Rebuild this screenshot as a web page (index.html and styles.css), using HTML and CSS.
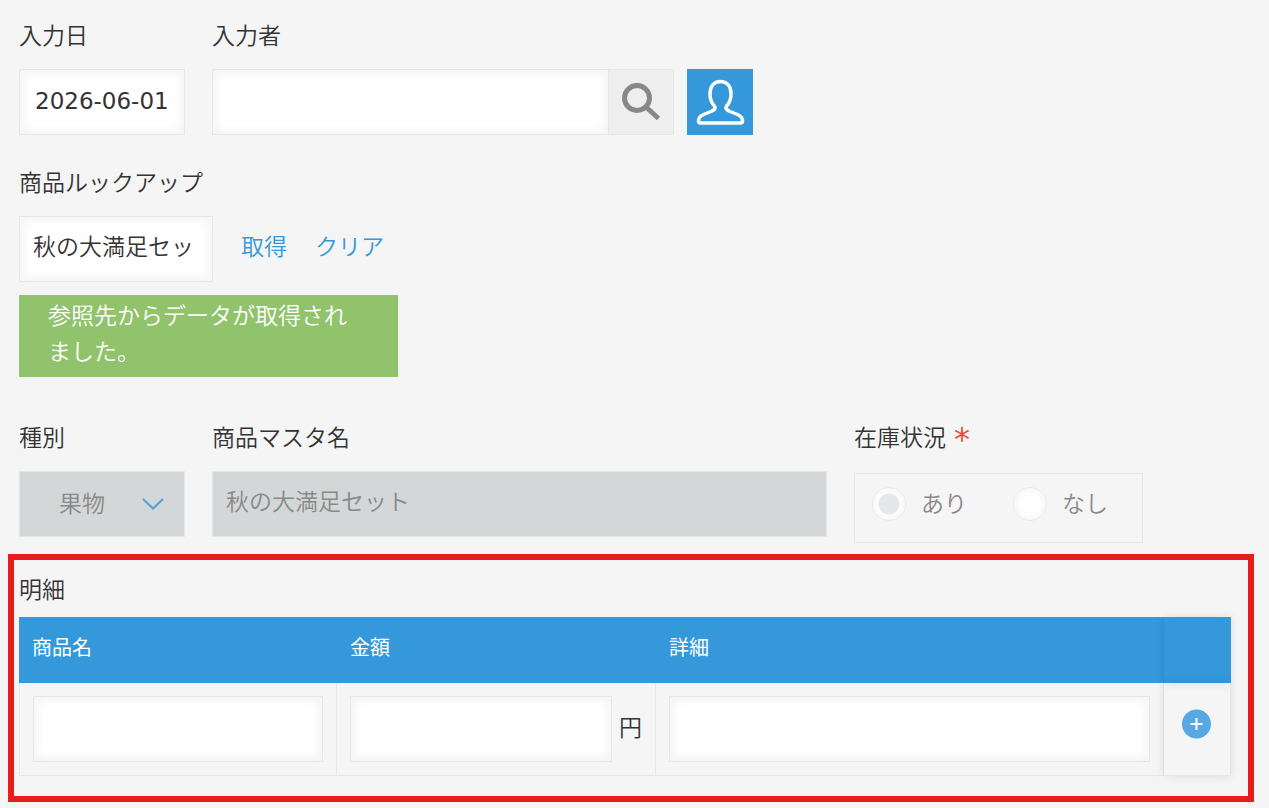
FILE: index.html
```html
<!DOCTYPE html>
<html lang="ja">
<head>
  <meta charset="UTF-8" />
  <meta name="viewport" content="width=device-width, initial-scale=1" />
  <title>商品入力</title>
  <link rel="stylesheet" href="styles.css">
</head>
<body>

<form class="record">
  <div class="row">
    <div class="field field-small">
      <label class="field-label" for="inputDate">入力日</label>
      <input class="text-input date-input" type="text" id="inputDate" value="2026-06-01" />
    </div>
    <div class="field">
      <label class="field-label" for="inputUser">入力者</label>
      <div class="user-select">
        <div class="search-box">
          <input class="text-input" type="text" id="inputUser" />
          <button type="button" class="search-btn" aria-label="検索">
            <svg width="64" height="64" viewBox="0 0 64 64">
              <circle cx="28" cy="28" r="12.5" fill="none" stroke="#888" stroke-width="5" />
              <path d="M37 37L49.5 48.5" stroke="#888" stroke-width="5" />
            </svg>
          </button>
        </div>
        <button type="button" class="user-btn" aria-label="ユーザー選択">
          <svg width="66" height="66" viewBox="0 0 66 66">
            <path d="M33.5 12.5C27 12.5 23 17.5 23 25C23 30 25 34.5 27.5 37C29 39.5 27.5 41 24 42.5L16.5 45.5C13 47 11.500 49 11.5 52Q11.5 54 13.5 54H53.5Q55.500 54 55.500 52C55.5 49 54 47 50.5 45.5L43 42.5C39.5 41 38 39.5 39.5 37C42 34.5 44 30 44 25C44 17.5 40 12.5 33.5 12.5Z" fill="none" stroke="#fff" stroke-width="3.5" stroke-linejoin="round" />
          </svg>
        </button>
      </div>
    </div>
  </div>

  <div class="row">
    <div class="field">
      <label class="field-label" for="lookup">商品ルックアップ</label>
      <div class="lookup">
        <input class="text-input lookup-input" type="text" id="lookup" value="秋の大満足セット" />
        <a href="#">取得</a>
        <a href="#">クリア</a>
      </div>
      <p class="message">参照先からデータが取得されました。</p>
    </div>
  </div>

  <div class="row row-master">
    <div class="field field-small">
      <label class="field-label" for="kind">種別</label>
      <div class="select-box">
        <select id="kind" disabled>
          <option>果物</option>
        </select>
        <svg class="arrow" width="22" height="14" viewBox="0 0 22 14">
          <path d="M1 2L11 11.5L21 2" fill="none" stroke="#4fa3dc" stroke-width="2.2" />
        </svg>
      </div>
    </div>
    <div class="field field-wide">
      <label class="field-label" for="masterName">商品マスタ名</label>
      <input class="text-input" type="text" id="masterName" value="秋の大満足セット" disabled />
    </div>
    <div class="field">
      <span class="field-label" id="stockLabel">在庫状況<span class="required">*</span></span>
      <div class="radio-group" role="radiogroup" aria-labelledby="stockLabel">
        <label><input type="radio" name="stock" checked disabled /><span>あり</span></label>
        <label><input type="radio" name="stock" disabled /><span>なし</span></label>
      </div>
    </div>
  </div>

  <section class="details">
    <h2 class="field-label">明細</h2>
    <table>
      <colgroup>
        <col class="col-name" />
        <col class="col-price" />
        <col />
        <col class="col-action" />
      </colgroup>
      <thead>
        <tr>
          <th id="thName">商品名</th>
          <th id="thPrice">金額</th>
          <th id="thDetail">詳細</th>
          <th class="action"></th>
        </tr>
      </thead>
      <tbody>
        <tr>
          <td><input class="text-input" type="text" aria-labelledby="thName" /></td>
          <td>
            <div class="price">
              <input class="text-input" type="text" aria-labelledby="thPrice" />
              <span>円</span>
            </div>
          </td>
          <td><input class="text-input" type="text" aria-labelledby="thDetail" /></td>
          <td class="action">
            <button type="button" class="add-btn" aria-label="行を追加">
              <svg width="30" height="30" viewBox="0 0 30 30">
                <circle cx="15.5" cy="15" r="14.5" fill="#55a8e2" />
                <path d="M9.5 15H21.5M15.5 9V21" stroke="#fff" stroke-width="2" />
              </svg>
            </button>
          </td>
        </tr>
      </tbody>
    </table>
  </section>
</form>

</body>
</html>
```

FILE: styles.css
```css
* {
  margin: 0; padding: 0; box-sizing: border-box;
}
body {
  background: #f5f5f5;
  color: #333;
  font-family: 'Noto Sans CJK JP', sans-serif;
  font-size: 23px;
  font-weight: 350;
  line-height: 36px;
  padding: 16px 15px 6px 8px;
}
input, select, button {
  font: inherit;
  color: inherit;
}
button {
  border: none;
  cursor: pointer;
}
svg {
  display: block;
}
.row {
  display: flex;
  align-items: flex-start;
  gap: 27px;
  padding-left: 11px;
  margin-bottom: 28px;
}
.row-master {
  margin-top: 41px;
  margin-bottom: 11px;
}
.field-small {
  width: 166px;
}
.field-wide {
  width: 615px;
}
.field-label {
  display: block;
  font-size: 23px;
  font-weight: 350;
  margin-bottom: 17px;
}
.text-input {
  display: block;
  width: 100%;
  height: 66px;
  padding: 0 13px 8px;
  background: #fff;
  border: 1px solid #e3e7e8;
  border-radius: 0;
  box-shadow: inset 0 0 8px 4px #f5f5f5;
}
.text-input:disabled {
  background: #d4d7d7;
  color: #888;
  box-shadow: none;
}
.date-input {
  font-family: 'DejaVu Sans', sans-serif;
  font-weight: 400;
  padding: 0 15px 2px;
}
.user-select {
  display: flex;
  gap: 13px;
}
.search-box {
  display: flex;
  width: 462px;
}
.search-box .text-input {
  flex: 1;
  min-width: 0;
}
.search-btn {
  width: 66px;
  height: 66px;
  margin-left: -1px;
  background: #eee;
  border: 1px solid #e3e7e8;
}
.user-btn {
  width: 66px;
  height: 66px;
  background: #3498db;
}
.lookup {
  display: flex;
  align-items: center;
}
.lookup-input {
  width: 194px;
}
.lookup a {
  color: #3498db;
  text-decoration: none;
  margin-left: 28px;
  padding-bottom: 8px;
}
.message {
  width: 379px;
  margin-top: 13px;
  padding: 1px 29px 9px;
  background: #91c36c;
  color: #fff;
}
.select-box {
  position: relative;
}
select {
  display: block;
  appearance: none;
  width: 100%;
  height: 66px;
  padding: 0 39px 4px;
  background: #d4d7d7;
  border: 1px solid #e3e7e8;
  border-radius: 0;
}
select:disabled {
  color: #888;
  opacity: 1;
}
.arrow {
  position: absolute;
  right: 21px;
  top: 26px;
  pointer-events: none;
}
.required {
  font-family: 'DejaVu Sans', sans-serif;
  font-size: 32px;
  font-weight: 400;
  line-height: 1px;
  vertical-align: -4px;
  color: #e74c3c;
  margin-left: 8px;
}
.radio-group {
  display: flex;
  gap: 46px;
  width: 289px;
  height: 70px;
  margin-top: 19px;
  padding: 13px 17px;
  border: 1px solid #e3e7e8;
  color: #888;
}
.radio-group label {
  display: flex;
  align-items: center;
  gap: 15px;
  height: 34px;
}
.radio-group span {
  padding-bottom: 4px;
}
.radio-group input {
  appearance: none;
  width: 34px;
  height: 34px;
  border: 1px solid #e8eaea;
  border-radius: 50%;
  background: #fff;
  box-shadow: inset 0 0 8px #f0f0f0;
}
.radio-group input:checked {
  background: radial-gradient(circle, #e3e7e8 10px, #fff 11px);
}
.details {
  border: 6px solid #e81c1c;
  padding: 10px 17px 20px 5px;
}
.details .field-label {
  margin-bottom: 11px;
}
table {
  width: 100%;
  table-layout: fixed;
  border-collapse: separate;
  border-spacing: 0;
}
.col-name {
  width: 318px;
}
.col-price {
  width: 319px;
}
.col-action {
  width: 67px;
}
th {
  height: 66px;
  padding: 0 13px 6px;
  background: #3498db;
  color: #fff;
  font-size: 20px;
  font-weight: 400;
  text-align: left;
}
td {
  padding: 13px;
  border-right: 1px solid #e3e7e8;
  border-bottom: 1px solid #e3e7e8;
}
td:first-child {
  border-left: 1px solid #e3e7e8;
}
.action {
  box-shadow: 0 0 10px rgba(0,0,0,0.1);
}
td.action {
  padding: 0 17px 10px;
}
.price {
  display: flex;
  align-items: center;
  gap: 7px;
}
.price span {
  padding-bottom: 6px;
}
.price .text-input {
  flex: 1;
  min-width: 0;
}
.add-btn {
  display: block;
  background: none;
}
```
